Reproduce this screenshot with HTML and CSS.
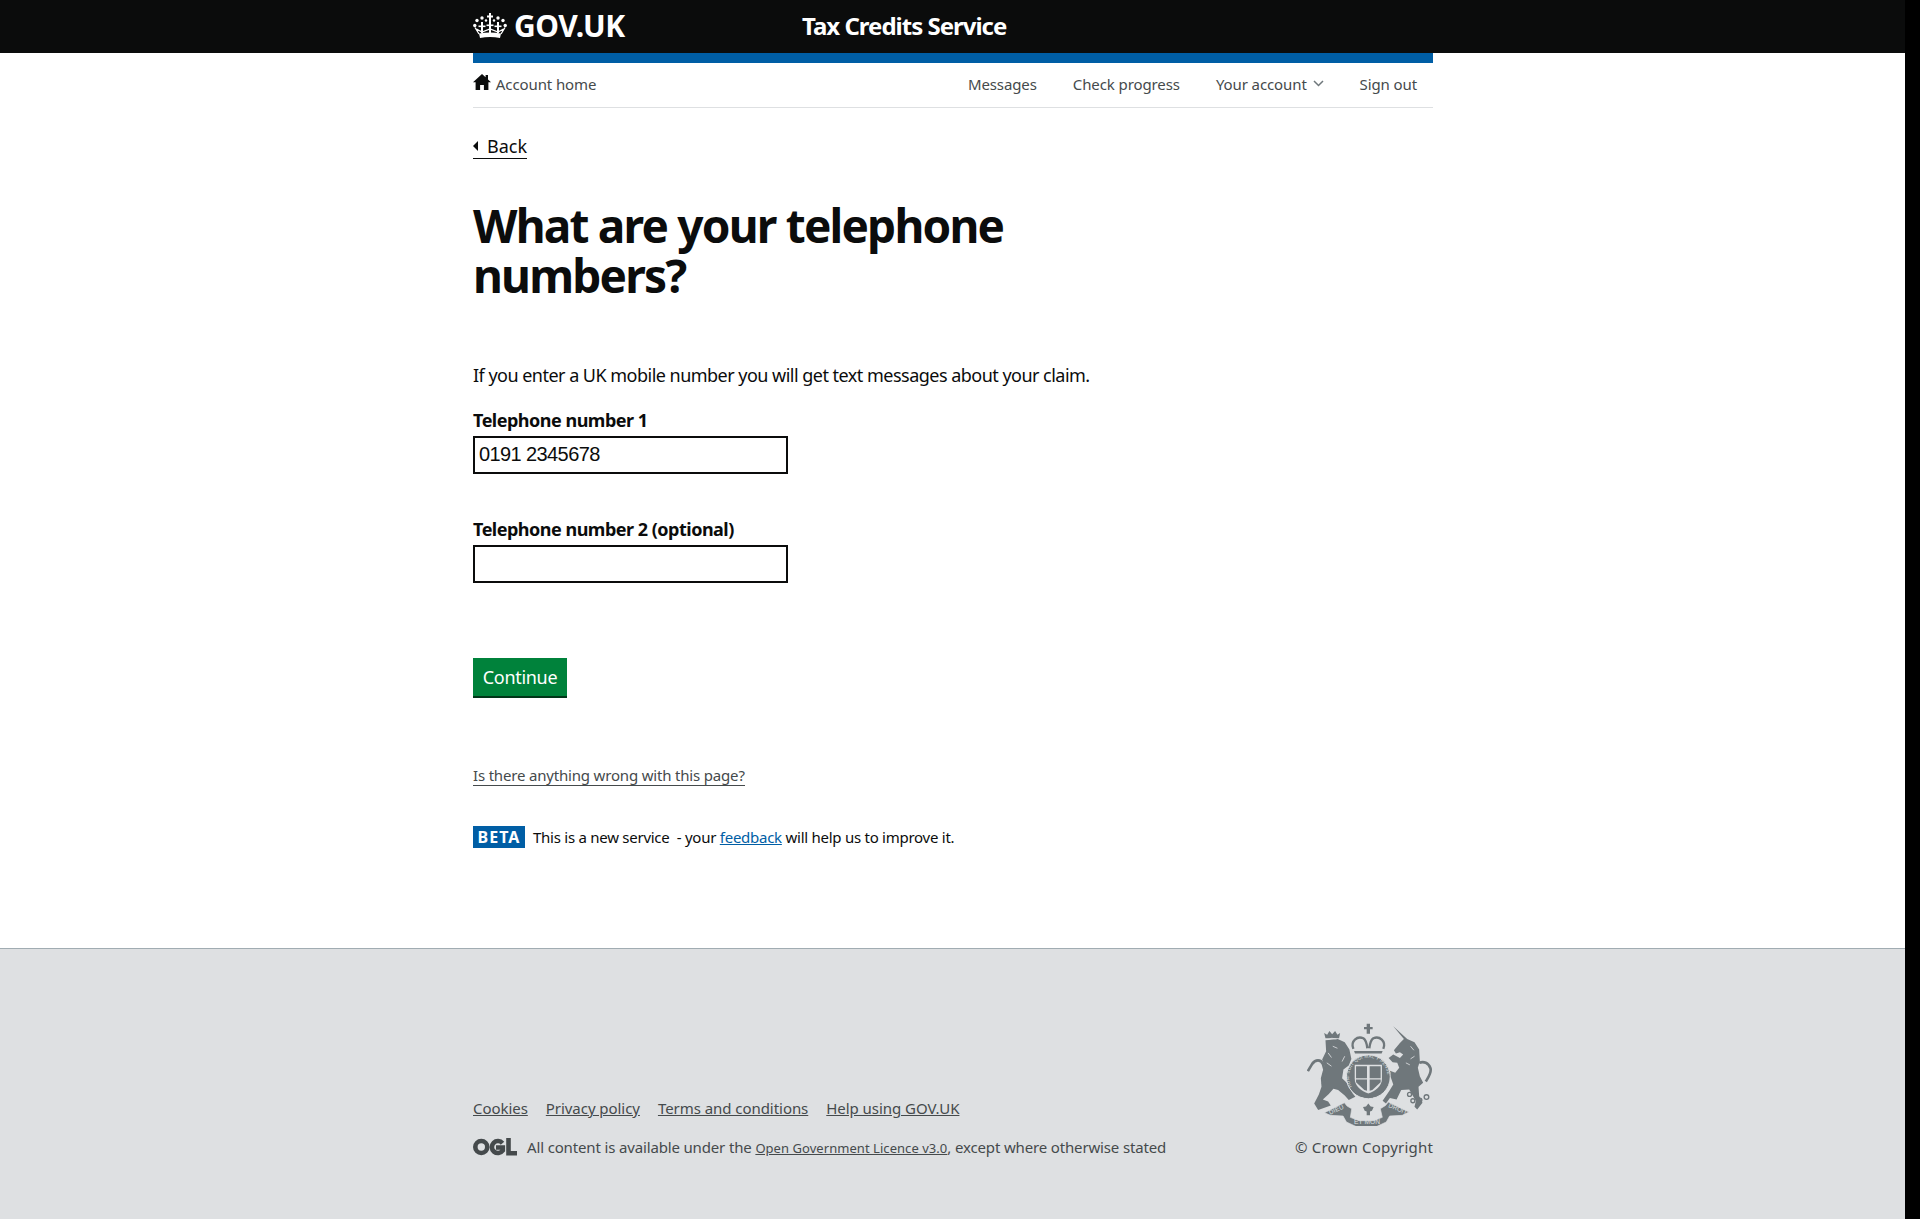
FILE: index.html
```html
<!DOCTYPE html>
<html lang="en">
<head>
<meta charset="utf-8">
<title>What are your telephone numbers? - Tax Credits Service</title>
<link rel="stylesheet" href="styles.css">
</head>
<body>
  <header class="top-bar">
    <div class="wrap top-inner">
      <a class="logo" href="#">
        <svg class="crown" viewBox="0 0 34 25" width="34" height="25" aria-hidden="true">
          <g fill="#fff">
            <rect x="16" y="0" width="2" height="20"/>
            <rect x="14" y="2.500" width="6" height="2"/>
            <rect x="13.500" y="11.500" width="7" height="1.600"/>
            <rect x="8" y="9" width="2" height="11"/>
            <rect x="24" y="9" width="2" height="11"/>
            <rect x="5.500" y="12.500" width="7" height="1.600"/>
            <rect x="21.500" y="12.500" width="7" height="1.600"/>
            <circle cx="9" cy="5" r="1.700"/><circle cx="25" cy="5" r="1.700"/>
            <circle cx="4" cy="7.500" r="1.700"/><circle cx="30" cy="7.500" r="1.700"/>
            <circle cx="1.800" cy="12.500" r="1.700"/><circle cx="32.200" cy="12.500" r="1.700"/>
            <circle cx="13" cy="7.500" r="1.200"/><circle cx="21" cy="7.500" r="1.200"/>
            <path d="M6 20.500Q17 18.500 28 20.500L27 25Q17 23 7 25Z"/>
          </g>
          <path d="M2 14.500L6 21M32 14.500L28 21M3.500 16L9 19L17 16L25 19L30.500 16" fill="none" stroke="#fff" stroke-width="1.300"/>
        </svg>
        <span class="logo-text">GOV.UK</span>
      </a>
      <a class="service-name" href="#">Tax Credits Service</a>
    </div>
  </header>

  <div class="wrap">
    <div class="blue-bar"></div>
    <nav class="account-nav">
      <a class="home-link" href="#">
        <svg viewBox="0 0 18 16" width="18" height="16" aria-hidden="true"><path fill="#0b0c0c" d="M9 0 0 8.200h2.600V16h4.500v-5h3.800v5h4.500V8.200H18L15 5.500V1h-2.400v2.300z"/></svg>
        Account home
      </a>
      <ul class="nav-links">
        <li><a href="#">Messages</a></li>
        <li><a href="#">Check progress</a></li>
        <li><a href="#">Your account <svg class="chevron" viewBox="0 0 11 7" width="11" height="7" aria-hidden="true"><path d="M1 1l4.500 4.500L10 1" fill="none" stroke="#6f777b" stroke-width="1.500"/></svg></a></li>
        <li><a href="#">Sign out</a></li>
      </ul>
    </nav>

    <main>
      <a class="back-link" href="#">Back</a>
      <h1>What are your telephone numbers?</h1>
      <p class="intro">If you enter a UK mobile number you will get text messages about your claim.</p>

      <form>
        <div class="field">
          <label for="tel1">Telephone number 1</label>
          <input id="tel1" class="text-input" type="text" value="0191 2345678">
        </div>
        <div class="field">
          <label for="tel2">Telephone number 2 (optional)</label>
          <input id="tel2" class="text-input" type="text">
        </div>
        <button class="btn" type="button">Continue</button>
      </form>

      <a class="report-link" href="#">Is there anything wrong with this page?</a>

      <p class="beta"><strong class="beta-tag">BETA</strong> <span>This is a new service &nbsp;- your <a href="#">feedback</a> will help us to improve it.</span></p>
    </main>
  </div>

  <footer class="site-footer">
    <div class="wrap footer-inner">
      <div class="footer-meta">
        <ul class="footer-links">
          <li><a href="#">Cookies</a></li>
          <li><a href="#">Privacy policy</a></li>
          <li><a href="#">Terms and conditions</a></li>
          <li><a href="#">Help using GOV.UK</a></li>
        </ul>
        <div class="licence">
          <svg class="ogl" viewBox="0 0 44 18" width="44" height="18" aria-hidden="true">
            <g fill="none" stroke="#454a4c" stroke-width="4.600">
              <circle cx="8.300" cy="9" r="6"/>
              <path d="M29.500 5.200A6 6 0 1 0 29.800 12.500V9.500H23"/>
              <path d="M35.500 0v15.200H44"/>
            </g>
          </svg>
          <span>All content is available under the <a class="licence-link" href="#">Open Government Licence v3.0</a>, except where otherwise stated</span>
        </div>
      </div>
      <div class="copyright">
        <svg class="crest" viewBox="113 70 378 310" width="126" height="103" aria-hidden="true">
          <defs>
            <path id="garter" d="M247 262A58 58 0 1 1 347 262"/>
          </defs>
          <g fill="#6f777b">
            <!-- lion -->
            <path d="M168 122L205 118L226 128L240 150L246 178L238 198L222 210L218 236L232 250L250 282L258 292L238 302L226 288L206 272L192 268L178 284L160 300L176 306L184 318L146 332L134 312L148 285L156 262L154 236L160 214L166 204L158 180L170 155Z"/>
            <path d="M168 116l-4-16 9 5 7-11 8 10 9-10 7 11 8-5-3 16z"/>
            <!-- unicorn -->
            <path d="M372 80L414 118L436 128L450 150L452 185L446 205L452 230L462 250L448 262L450 290L460 310L444 330L436 322L440 305L420 270L396 272L382 300L362 296L350 312L340 304L360 275L372 255L365 235L350 222L358 212L378 220L390 205L384 190L370 188L358 175L372 165L392 175L402 165L392 158L380 162L374 152L392 130L404 118Z"/>
            <!-- crown over shield -->
            <path d="M292 72h10v10h8v7h-8v13h-10V89h-8v-7h8z"/>
            <path d="M257 162h80l3-8h-86z"/>
            <!-- garter -->
            <circle cx="297" cy="232" r="66" stroke="#dee0e2" stroke-width="3"/>
            <!-- motto ribbon -->
            <path d="M165 340l60-30 8 10 14 8-4 26 26 10h44l26-10-6-26 16-10 8-10 62 30-20 10-38 2-10 18-30 14h-60l-30-14-10-18-38-2z" stroke="#dee0e2" stroke-width="2"/>
          </g>
          <g fill="none" stroke="#6f777b">
            <path d="M160 255c10-20 8-40 0-62-6-14-22-14-32 0l-13 22" stroke-width="8"/>
            <path d="M450 190c14-6 28 0 34 16 4 14-6 26-14 40" stroke-width="8"/>
            <g stroke-width="4">
              <circle cx="421" cy="285" r="6"/><circle cx="431" cy="304" r="6"/><circle cx="452" cy="302" r="6"/><circle cx="472" cy="293" r="7"/>
            </g>
            <path d="M252 148c-10-24 12-40 30-32 6 4 10 12 12 30M342 148c10-24-12-40-30-32-6 4-10 12-12 30" stroke-width="7"/>
          </g>
          <g fill="none" stroke="#dee0e2" stroke-width="2.500">
            <path d="M175 120l12-4 14 2"/>
            <path d="M262 145c-6-10 0-20 12-20M332 145c6-10 0-20-12-20"/>
            <path d="M190 140l14 6M176 160l10 14M226 170l-8 16M172 190l14 10M424 140l10 12M436 170l-12 8M410 190l12 6"/>
          </g>
          <text fill="#dee0e2" font-family="'Liberation Sans', sans-serif" font-size="13" letter-spacing="1"><textPath href="#garter">HONI SOIT QUI MAL Y PENSE</textPath></text>
          <g fill="#dee0e2">
            <path d="M256 196h82v42c0 22-20 38-41 44-21-6-41-22-41-44z"/>
            <circle cx="280" cy="298" r="3.500"/><circle cx="297" cy="302" r="3.500"/><circle cx="314" cy="298" r="3.500"/>
          </g>
          <g fill="#6f777b">
            <path d="M260 200h33v36h-33zM301 200h33v36h-33zM260 240h33v34l-8-2-25-24zM301 240h33v8l-25 24-8 2z"/>
            <path d="M297 312l7 9 9 2-5 11-6 2v12h-10v-12l-6-2-5-11 9-2z"/>
          </g>
          <g fill="#dee0e2" font-family="'Liberation Sans', sans-serif" font-size="19">
            <text x="182" y="346" transform="rotate(-24 182 346)">DIEU</text>
            <text x="254" y="373" font-size="20">ET MON</text>
            <text x="356" y="323" transform="rotate(22 356 323)">DROIT</text>
          </g>
        </svg>
        <span>&copy; Crown Copyright</span>
      </div>
    </div>
  </footer>
</body>
</html>
```

FILE: styles.css
```css
html {
  background-color: #000;
}

body {
  margin: 0;
  width: 1905px;
  min-height: 1219px;
  display: flex;
  flex-direction: column;
  background-color: #fff;
  color: #0b0c0c;
  font-family: "Noto Sans", sans-serif;
  font-size: 19px;
}

.wrap {
  width: 960px;
  margin-left: 473px;
}

/* top bar */
.top-bar {
  background-color: #0b0c0c;
  height: 53px;
}

.top-inner {
  display: flex;
  align-items: center;
  height: 51px;
}

.logo {
  display: flex;
  align-items: center;
  width: 329px;
  color: #fff;
  text-decoration: none;
}

.crown {
  margin-right: 7px;
}

.logo-text {
  font-size: 30px;
  font-weight: 700;
  letter-spacing: -0.5px;
}

.service-name {
  color: #fff;
  font-size: 24px;
  font-weight: 700;
  letter-spacing: -1px;
  text-decoration: none;
}

.blue-bar {
  height: 10px;
  background-color: #005ea5;
}

/* account nav */
.account-nav {
  display: flex;
  justify-content: space-between;
  align-items: center;
  height: 42px;
  padding-bottom: 2px;
  border-bottom: 1px solid #dee0e2;
  font-size: 15px;
  letter-spacing: -0.1px;
}

.account-nav a {
  color: #454a4c;
  text-decoration: none;
}

.home-link svg {
  margin-right: 1px;
}

.nav-links {
  display: flex;
  gap: 36px;
  margin: 0;
  padding: 0 16px 0 0;
  list-style: none;
}

.chevron {
  margin-left: 2px;
  vertical-align: 3px;
}

/* main column */
main {
  display: flex;
  flex-direction: column;
  align-items: flex-start;
}

.back-link {
  margin-top: 26px;
  padding-left: 14px;
  position: relative;
  color: #0b0c0c;
  font-size: 18px;
  line-height: 24px;
  text-decoration: none;
  border-bottom: 1px solid #0b0c0c;
}

.back-link::before {
  content: "";
  position: absolute;
  left: 0;
  top: 7px;
  border-style: solid;
  border-width: 5px 5px 5px 0;
  border-color: transparent #0b0c0c transparent transparent;
}

h1 {
  width: 630px;
  margin: 41px 0 0;
  font-size: 46px;
  line-height: 50px;
  font-weight: 700;
  letter-spacing: -1.8px;
}

.intro {
  margin: 63px 0 0;
  font-size: 18px;
  line-height: 25px;
  letter-spacing: -0.52px;
}

.field {
  margin-bottom: 43px;
}

form {
  margin-top: 20px;
}

label {
  display: block;
  font-size: 18px;
  font-weight: 700;
  line-height: 25px;
  letter-spacing: -0.5px;
  margin-bottom: 3px;
}

.text-input {
  display: block;
  box-sizing: border-box;
  width: 315px;
  height: 38px;
  padding: 0 4px 2px;
  border: 2px solid #0b0c0c;
  font-family: "Liberation Sans", sans-serif;
  font-size: 20px;
  letter-spacing: -0.6px;
  color: #0b0c0c;
  outline: none;
}

.btn {
  display: block;
  margin-top: 75px;
  width: 94px;
  height: 38px;
  padding: 0;
  border: none;
  box-shadow: 0 2px 0 #003618;
  background-color: #00823b;
  color: #fff;
  font-family: "Noto Sans", sans-serif;
  font-size: 18px;
  letter-spacing: -0.3px;
}

.report-link {
  margin-top: 70px;
  color: #454a4c;
  font-size: 15px;
  letter-spacing: -0.18px;
  text-decoration: none;
  border-bottom: 1px solid #454a4c;
  line-height: 19px;
}

.beta {
  margin: 40px 0 0;
  font-size: 15px;
  line-height: 22px;
  letter-spacing: -0.26px;
  display: flex;
  gap: 4px;
}

.beta-tag {
  background-color: #005ea5;
  color: #fff;
  width: 52px;
  text-align: center;
  font-size: 16px;
  letter-spacing: 1px;
  margin-right: 4px;
}

.beta a {
  color: #005ea5;
}

/* footer */
.site-footer {
  flex: 1;
  margin-top: 100px;
  background-color: #dee0e2;
  border-top: 1px solid #a1acb2;
}

.footer-inner {
  display: flex;
  justify-content: space-between;
  align-items: flex-end;
  padding-top: 74px;
}

.footer-meta {
  color: #454a4c;
  font-size: 15px;
}

.footer-meta a {
  color: #454a4c;
}

.footer-links {
  display: flex;
  gap: 18px;
  margin: 0 0 19px;
  padding: 0;
  list-style: none;
  letter-spacing: -0.05px;
}

.licence {
  display: flex;
  align-items: center;
  gap: 10px;
  letter-spacing: -0.15px;
}

.licence-link {
  font-size: 13px;
  letter-spacing: 0.05px;
}

.copyright {
  display: flex;
  flex-direction: column;
  align-items: flex-end;
  gap: 11px;
  color: #454a4c;
  font-size: 15px;
  letter-spacing: 0.2px;
}

.copyright span {
  line-height: 20px;
}
```
